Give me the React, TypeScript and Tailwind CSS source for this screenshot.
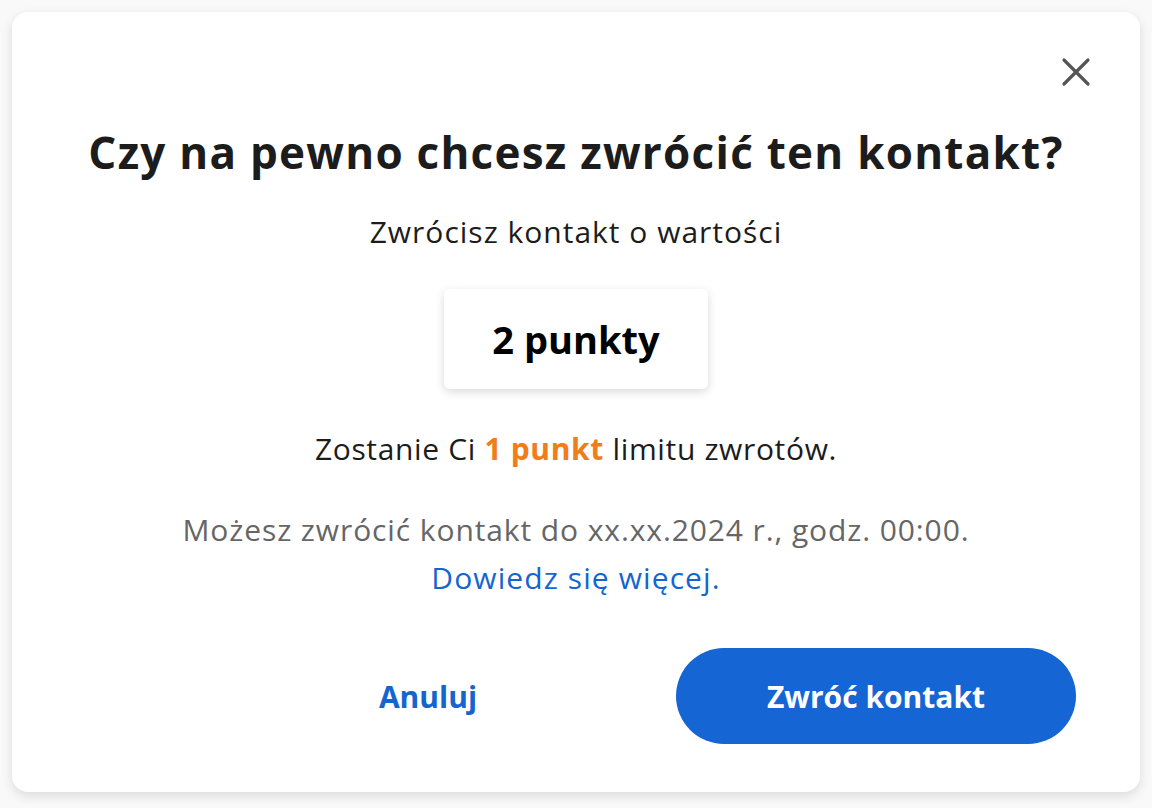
export default function App() {
  return (
    <div className="h-[808px] w-full bg-[#f9f9f9] px-3 pt-3 pb-4 font-['Open_Sans',sans-serif]">
      {/* dialog card */}
      <div className="flex h-full flex-col rounded-2xl bg-white shadow-[0_4px_12px_rgba(0,0,0,0.12)]">
        <div className="flex justify-end pt-[45px] pr-[49px]">
          <button className="text-[#555]">
            <svg width="30" height="30" viewBox="0 0 30 30" fill="none" stroke="currentColor" strokeWidth="3.2" strokeLinecap="round">
              <path d="M3 3L27 27M27 3L3 27" />
            </svg>
          </button>
        </div>

        <h1 className="mt-[39px] text-center text-[44px] leading-[52px] font-bold tracking-[1.25px] text-[#1c1c1c]">
          Czy na pewno chcesz zwrócić ten kontakt?
        </h1>

        <p className="mt-[34px] text-center text-[30px] leading-10 tracking-[1px] text-[#1c1c1c]">
          Zwrócisz kontakt o wartości
        </p>

        <div className="mx-auto mt-[37px] flex h-[100px] w-[264px] items-center justify-center rounded-md bg-white shadow-[0_3px_10px_rgba(0,0,0,0.15)]">
          <span className="text-[38px] font-bold text-black">2 punkty</span>
        </div>

        <p className="mt-10 text-center text-[30px] leading-10 tracking-[0.65px] text-[#1c1c1c]">
          Zostanie Ci <span className="font-bold text-[#f07d19]">1 punkt</span> limitu zwrotów.
        </p>

        <p className="mt-[37px] text-center text-[30px] leading-[48px] tracking-[0.9px] text-[#666]">
          Możesz zwrócić kontakt do xx.xx.2024 r., godz. 00:00.
          <br />
          <a className="tracking-[1.1px] text-[#1565d0]">Dowiedz się więcej.</a>
        </p>

        <div className="mt-[46px] flex justify-end gap-12 pr-16">
          <button className="h-24 w-[400px] rounded-full text-[30px] font-bold text-[#1565d0]">
            Anuluj
          </button>
          <button className="h-24 w-[400px] rounded-full bg-[#1565d4] text-[30px] font-bold text-white">
            Zwróć kontakt
          </button>
        </div>
      </div>
    </div>
  );
}
